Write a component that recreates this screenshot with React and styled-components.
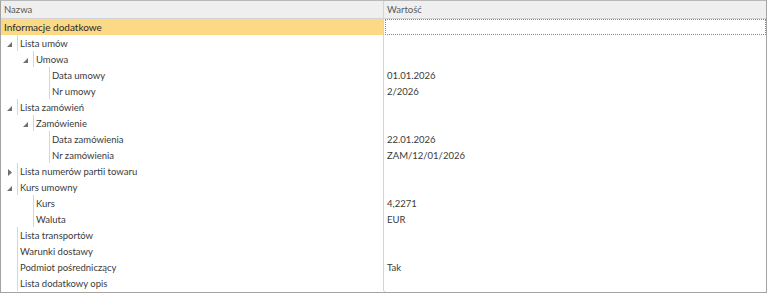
import React from "react";
import styled, { createGlobalStyle } from "styled-components";

const GlobalStyle = createGlobalStyle`
  html, body {
    margin: 0;
    padding: 0;
    background: #ffffff;
  }
  body {
    font-family: Lato, "Liberation Sans", sans-serif;
    font-size: 9.5px;
  }
`;

const rows = [
  { label: "Lista umów", level: 0, expander: "open" },
  { label: "Umowa", level: 1, expander: "open" },
  { label: "Data umowy", level: 2, value: "01.01.2026" },
  { label: "Nr umowy", level: 2, value: "2/2026" },
  { label: "Lista zamówień", level: 0, expander: "open" },
  { label: "Zamówienie", level: 1, expander: "open" },
  { label: "Data zamówienia", level: 2, value: "22.01.2026" },
  { label: "Nr zamówienia", level: 2, value: "ZAM/12/01/2026" },
  { label: "Lista numerów partii towaru", level: 0, expander: "closed" },
  { label: "Kurs umowny", level: 0, expander: "open" },
  { label: "Kurs", level: 1, value: "4,2271" },
  { label: "Waluta", level: 1, value: "EUR" },
  { label: "Lista transportów", level: 0 },
  { label: "Warunki dostawy", level: 0 },
  { label: "Podmiot pośredniczący", level: 0, value: "Tak" },
  { label: "Lista dodatkowy opis", level: 0 },
];

const Grid = styled.div`
  width: 767px;
  height: 293px;
  box-sizing: border-box;
  border: 1px solid #a3a3a3;
  border-top-color: #b8b8b8;
  display: flex;
  flex-direction: column;
  background: #ffffff;
  overflow: hidden;
`;

const HeaderRow = styled.div`
  display: flex;
  height: 17px;
  background: #efefef;
  border-bottom: 1px solid #d4d4d4;
  color: #5a5a5a;
`;

const HeaderCell = styled.div`
  display: flex;
  align-items: center;
  padding-left: 3px;
  box-sizing: border-box;
  width: ${(p) => (p.$fixed ? "383px" : "auto")};
  flex: ${(p) => (p.$fixed ? "none" : "1")};
  border-right: ${(p) => (p.$fixed ? "1px solid #d4d4d4" : "none")};
`;

const Row = styled.div`
  display: flex;
  height: 16px;
  flex: none;
`;

const NameCell = styled.div`
  width: 383px;
  flex: none;
  box-sizing: border-box;
  border-right: 1px solid #d4d4d4;
  display: flex;
  align-items: stretch;
  background: ${(p) => (p.$selected ? "#fcd985" : "transparent")};
  color: ${(p) => (p.$selected ? "#2a2a2a" : "#3a3a3a")};
  font-size: ${(p) => (p.$selected ? "10px" : "inherit")};
`;

const ValueCell = styled.div`
  flex: 1;
  display: flex;
  align-items: center;
  padding-left: 3px;
  box-sizing: border-box;
  color: #3a3a3a;
  border: ${(p) => (p.$focused ? "1px dotted #8a8a8a" : "none")};
  margin-left: ${(p) => (p.$focused ? "1px" : "0")};
`;

const Indent = styled.div`
  flex: none;
  width: ${(p) => p.$level * 16}px;
`;

const Expander = styled.div`
  flex: none;
  width: 16px;
  display: flex;
  align-items: center;
  justify-content: center;
  padding: 2px 0 0 1px;
  box-sizing: border-box;
`;

const Label = styled.div`
  display: flex;
  align-items: center;
  padding-left: ${(p) => (p.$root ? "3px" : "2px")};
  border-left: ${(p) => (p.$root ? "none" : "1px solid #d6d6d6")};
  white-space: nowrap;
`;

const Filler = styled.div`
  flex: 1;
  display: flex;
`;

const FillerName = styled.div`
  width: 383px;
  border-right: 1px solid #d4d4d4;
`;

const ExpandIcon = ({ kind }) =>
  kind === "open" ? (
    <svg width="5" height="5" viewBox="0 0 5 5">
      <polygon points="5,0 5,5 0,5" fill="#707070" />
    </svg>
  ) : kind === "closed" ? (
    <svg width="4" height="7" viewBox="0 0 4 7">
      <polygon points="0,0 4,3.5 0,7" fill="#707070" />
    </svg>
  ) : null;

const App = () => {
  return (
    <>
      <GlobalStyle />
      <Grid>
        <HeaderRow>
          <HeaderCell $fixed>Nazwa</HeaderCell>
          <HeaderCell>Wartość</HeaderCell>
        </HeaderRow>
        <Row>
          <NameCell $selected>
            <Label $root>Informacje dodatkowe</Label>
          </NameCell>
          <ValueCell $focused />
        </Row>
        {rows.map((r) => (
          <Row key={r.label}>
            <NameCell>
              <Indent $level={r.level} />
              <Expander>
                <ExpandIcon kind={r.expander} />
              </Expander>
              <Label>{r.label}</Label>
            </NameCell>
            <ValueCell>{r.value}</ValueCell>
          </Row>
        ))}
        <Filler>
          <FillerName />
        </Filler>
      </Grid>
    </>
  );
};

export default App;
